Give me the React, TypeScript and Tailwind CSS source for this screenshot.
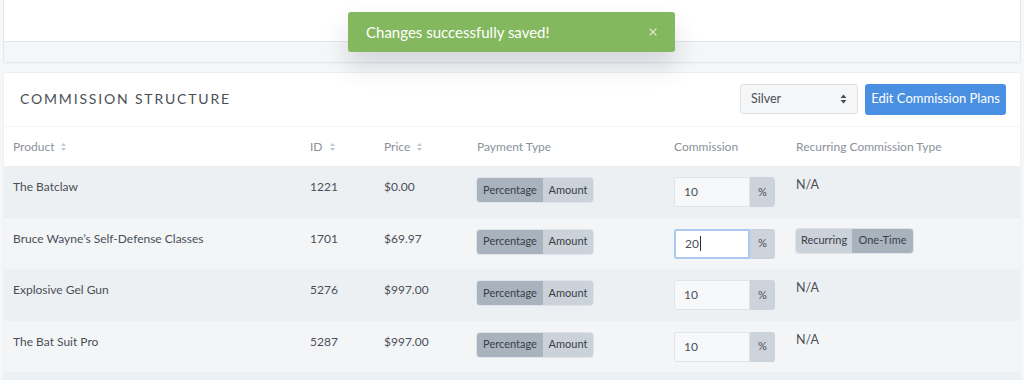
import { X } from "lucide-react";

type Row = {
  name: string;
  id: string;
  price: string;
  commission: string;
  focused?: boolean;
  recurring?: boolean;
};

const rows: Row[] = [
  { name: "The Batclaw", id: "1221", price: "$0.00", commission: "10" },
  { name: "Bruce Wayne’s Self-Defense Classes", id: "1701", price: "$69.97", commission: "20", focused: true, recurring: true },
  { name: "Explosive Gel Gun", id: "5276", price: "$997.00", commission: "10" },
  { name: "The Bat Suit Pro", id: "5287", price: "$997.00", commission: "10" },
];

const cols = "grid grid-cols-[297px_74px_93px_197px_122px_1fr]";

const SortIcon = () => (
  <svg width="7" height="10" viewBox="0 0 7 10" className="ml-[6px] inline-block">
    <path d="M3.5 1 L6 4 H1 Z" fill="#c3c8cf" />
    <path d="M3.5 9 L6 6 H1 Z" fill="#c3c8cf" />
  </svg>
);

const Toggle = ({ left, right, active, w }: { left: string; right: string; active: "left" | "right"; w: [number, number] }) => (
  <div className="flex h-[24px] rounded-[3px] overflow-hidden text-[11px] text-[#3a3f46] shadow-[0_0_0_1px_#dfe4ea]">
    <span
      className={`flex items-center justify-center ${active === "left" ? "bg-[#a8b3be]" : "bg-[#cbd2d9]"}`}
      style={{ width: w[0] }}
    >
      {left}
    </span>
    <span
      className={`flex items-center justify-center ${active === "right" ? "bg-[#a8b3be]" : "bg-[#cbd2d9]"}`}
      style={{ width: w[1] }}
    >
      {right}
    </span>
  </div>
);

export default function App() {
  return (
    <div className="relative w-[1024px] h-[380px] overflow-hidden bg-[#f6f7f9] font-['Lato',sans-serif]">
      {/* top card, mostly hidden under the toast */}
      <div className="mx-[3px] border-x border-b border-[#e6e8ec] rounded-b-[3px] shadow-[0_1px_2px_rgba(0,0,0,0.04)]">
        <div className="h-[41px] bg-white" />
        <div className="h-[21px] bg-[#f5f6f8] border-t border-[#e4e6ea]" />
      </div>

      {/* commission card */}
      <div className="mx-[3px] mt-[9px] bg-white border border-[#eceef1] rounded-[3px]">
        <div className="flex items-center justify-between h-[53px] pl-[16px] pr-[14px]">
          <h2 className="text-[14px] tracking-[0.13em] text-[#4a4f57] font-normal mt-[-2px]">COMMISSION STRUCTURE</h2>
          <div className="flex items-center gap-[7px] mt-[-1px]">
            <div className="flex items-center justify-between w-[118px] h-[30px] px-[10px] bg-[#f5f6f8] border border-[#dde1e6] rounded-[3px] text-[12.5px] text-[#4a4f57]">
              <span>Silver</span>
              <svg width="7" height="10" viewBox="0 0 7 10">
                <path d="M3.5 0.5 L6.5 4 H0.5 Z" fill="#4a4f57" />
                <path d="M3.5 9.5 L6.5 6 H0.5 Z" fill="#4a4f57" />
              </svg>
            </div>
            <button className="w-[141px] h-[31px] bg-[#4a90e2] text-white text-[13px] rounded-[3px]">Edit Commission Plans</button>
          </div>
        </div>

        <div className={`${cols} h-[40px] items-center pl-[9px] text-[12px] text-[#8b919a] border-t border-[#f3f4f6]`}>
          <span className="flex items-center">Product<SortIcon /></span>
          <span className="flex items-center">ID<SortIcon /></span>
          <span className="flex items-center">Price<SortIcon /></span>
          <span>Payment Type</span>
          <span>Commission</span>
          <span>Recurring Commission Type</span>
        </div>

        {rows.map((r, i) => (
          <div
            key={r.id}
            className={`${cols} h-[51.5px] items-start pl-[9px] text-[12px] text-[#4a4f57] ${i % 2 === 0 ? "bg-[#edf0f3]" : "bg-[#f4f5f7]"}`}
          >
            <span className="pt-[12px]">{r.name}</span>
            <span className="pt-[12px]">{r.id}</span>
            <span className="pt-[12px]">{r.price}</span>
            <div className="pt-[12px]">
              <div className="inline-flex">
                <Toggle left="Percentage" right="Amount" active="left" w={[66, 50]} />
              </div>
            </div>
            <div className="pt-[11px]">
              <div className="flex h-[30px] w-[101px]">
                <div
                  className={`flex items-center w-[76px] px-[9px] text-[12px] text-[#4a4f57] rounded-l-[3px] ${
                    r.focused ? "bg-white border-2 border-[#a9c9f0]" : "bg-[#f7f8fa] border border-[#e0e4e9]"
                  }`}
                >
                  {r.commission}
                  {r.focused && <span className="ml-[1px] w-px h-[15px] bg-[#2b2f35]" />}
                </div>
                <div className="flex items-center justify-center flex-1 bg-[#cdd3da] text-[11px] text-[#4a4f57] rounded-r-[3px]">%</div>
              </div>
            </div>
            <div className={r.recurring ? "pt-[11px]" : "pt-[10px]"}>
              {r.recurring ? (
                <div className="inline-flex">
                  <Toggle left="Recurring" right="One-Time" active="right" w={[56, 61]} />
                </div>
              ) : (
                <span className="text-[12.5px]">N/A</span>
              )}
            </div>
          </div>
        ))}
        <div className="h-[20px] bg-[#edf0f3]" />
      </div>

      {/* toast */}
      <div className="absolute left-[348px] top-[12px] w-[327px] h-[40px] rounded-[3px] bg-[#84b85e] flex items-center justify-between pl-[18px] pr-[16px] shadow-[0_14px_24px_rgba(60,70,90,0.18)]">
        <span className="text-white text-[15px]">Changes successfully saved!</span>
        <X size={12} strokeWidth={2.5} className="text-[#d6e8c8]" />
      </div>
    </div>
  );
}
